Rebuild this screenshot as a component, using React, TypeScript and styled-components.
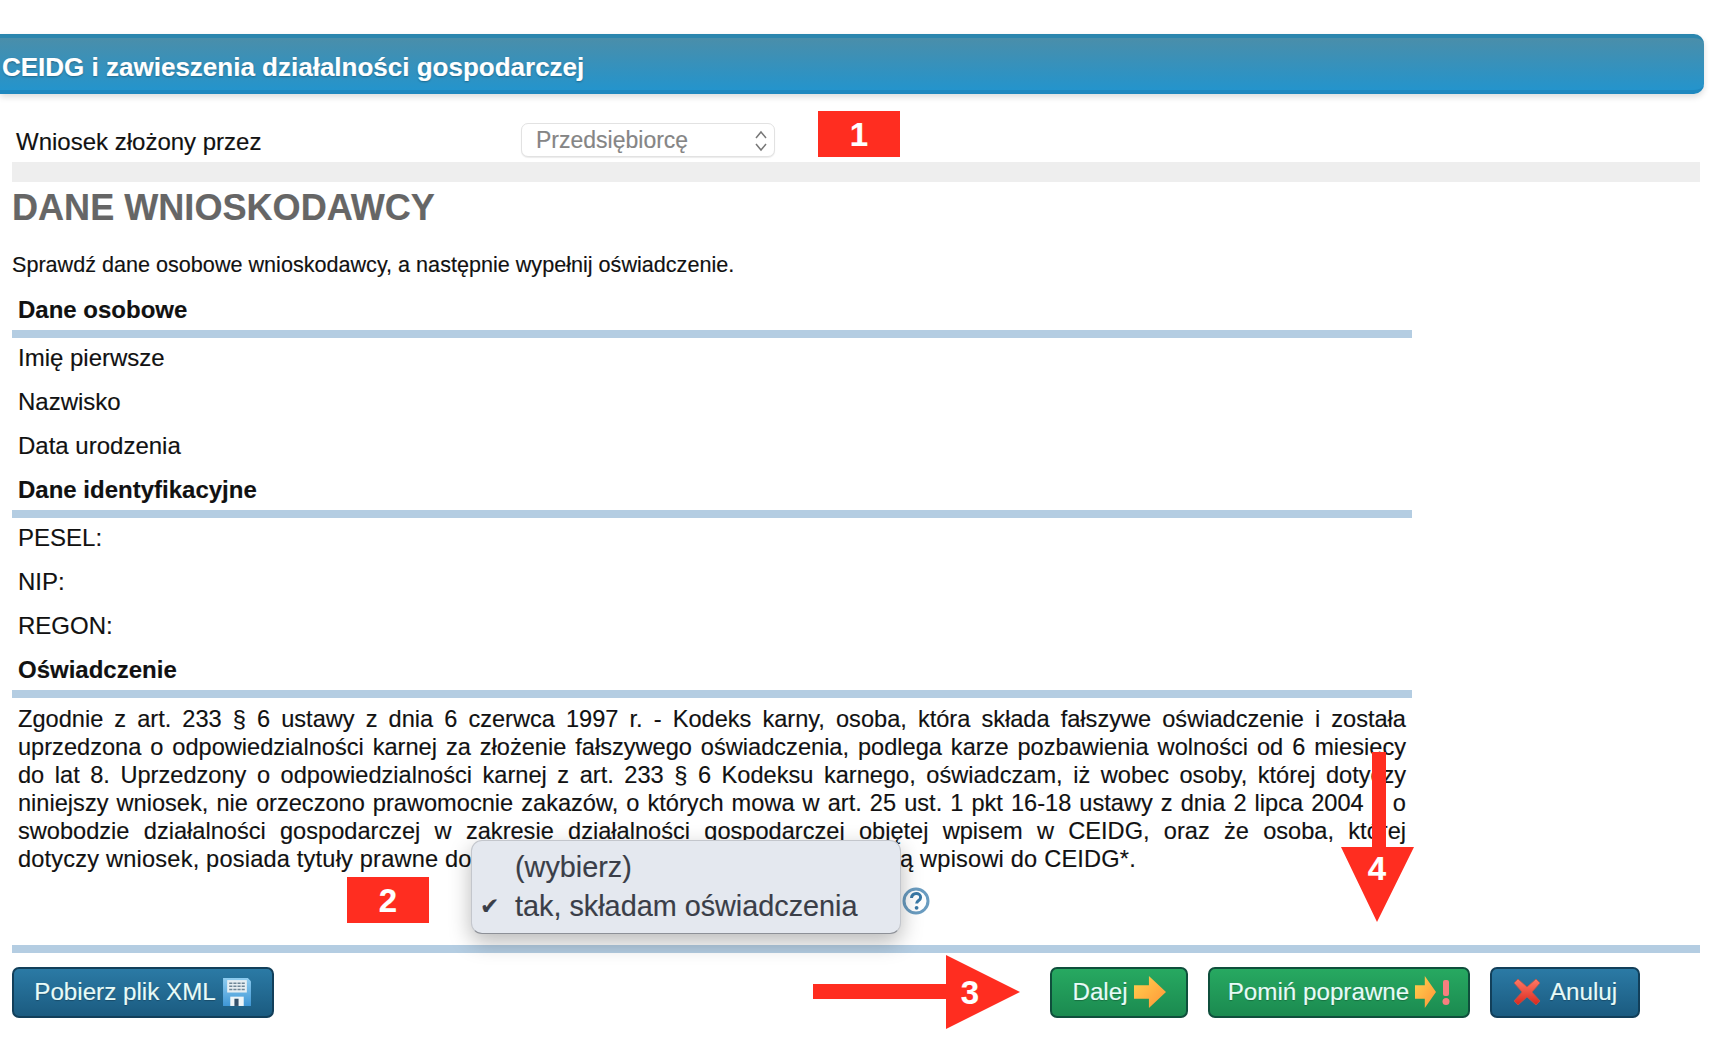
import React from "react";
import styled, { createGlobalStyle } from "styled-components";

const GlobalStyle = createGlobalStyle`
  html, body {
    margin: 0;
    padding: 0;
    background: #fff;
  }
  body {
    font-family: "Liberation Sans", Arial, sans-serif;
    color: #111;
    -webkit-text-stroke: 0.15px currentColor;
  }
`;

const Page = styled.div`
  position: relative;
  width: 1717px;
  height: 1052px;
  padding-top: 34px;
  box-sizing: border-box;
  overflow: hidden;
`;

const TitleBar = styled.div`
  width: 1704px;
  height: 60px;
  box-sizing: border-box;
  padding: 6px 0 0 2px;
  display: flex;
  align-items: center;
  border-top: 4px solid #2b86ae;
  border-bottom: 4px solid #1f88bf;
  border-radius: 0 10px 10px 0;
  background: linear-gradient(#4a8eaa, #2494cc);
  box-shadow: 0 3px 6px rgba(0, 0, 0, 0.14);
  color: #fff;
  font-size: 26px;
  font-weight: 700;
  text-shadow: 0 1px 2px rgba(0, 0, 0, 0.3);
`;

const Content = styled.div`
  width: 1688px;
  margin-left: 12px;
`;

const ApplicantRow = styled.div`
  height: 68px;
  box-sizing: border-box;
  padding: 29px 0 0 4px;
  display: flex;
  align-items: flex-start;
`;

const ApplicantLabel = styled.div`
  width: 505px;
  font-size: 24px;
  line-height: 38px;
`;

const FakeSelect = styled.div`
  width: 254px;
  height: 34px;
  box-sizing: border-box;
  padding: 1px 6px 0 14px;
  display: flex;
  align-items: center;
  justify-content: space-between;
  background: #fff;
  border: 1px solid #e2e2e2;
  border-radius: 7px;
  box-shadow: 0 1px 1px rgba(0, 0, 0, 0.08);
  color: #858585;
  font-size: 23px;
`;

const GreyBar = styled.div`
  height: 20px;
  background: #eeeeee;
`;

const Heading = styled.h1`
  margin: 0;
  height: 50px;
  padding-top: 1px;
  box-sizing: border-box;
  color: #666;
  font-size: 36.1px;
  line-height: 50px;
  font-weight: 700;
`;

const Intro = styled.p`
  margin: 16px 0 0;
  font-size: 21.6px;
  line-height: 34px;
`;

const Sheet = styled.div`
  width: 1400px;
`;

const SectionTitle = styled.div<{ $first?: boolean }>`
  padding: ${(p) => (p.$first ? "11px" : "3px")} 0 3px 6px;
  font-size: 24px;
  line-height: 34px;
  font-weight: 700;
`;

const Rule = styled.div`
  height: 8px;
  background: #b4cde2;
`;

const Field = styled.div`
  height: 44px;
  padding-left: 6px;
  font-size: 24px;
  line-height: 40px;
`;

const Statement = styled.div`
  width: 1388px;
  margin: 8px 0 0 6px;
  font-size: 23.6px;
  line-height: 27.9px;
  white-space: nowrap;
`;

const StatementLine = styled.div<{ $last?: boolean }>`
  text-align: justify;
  text-align-last: ${(p) => (p.$last ? "left" : "justify")};
  letter-spacing: ${(p) => (p.$last ? "0.19px" : "0")};
`;

const ConsentRow = styled.div`
  position: relative;
  height: 71.5px;
  box-sizing: border-box;
  padding: 14px 0 0 890px;
`;

const HelpIcon = styled.svg`
  display: block;
  width: 28px;
  height: 28px;
`;

const Menu = styled.div`
  position: absolute;
  left: 459px;
  top: -33px;
  width: 430px;
  height: 94px;
  box-sizing: border-box;
  padding: 7px 0;
  background: #e4e8ef;
  border: 1px solid #c3c6cc;
  border-bottom-color: #8d9097;
  border-radius: 11px;
  box-shadow: 0 8px 22px rgba(0, 0, 0, 0.28);
  color: #3a3e48;
  font-size: 28.8px;
`;

const MenuItem = styled.div`
  position: relative;
  height: 38.5px;
  padding-left: 43px;
  line-height: 38.5px;
`;

const MenuCheck = styled.span`
  position: absolute;
  left: 8px;
  top: 0;
  font-family: "DejaVu Sans", sans-serif;
  font-size: 23px;
`;

const ButtonBar = styled.div`
  margin-top: 14px;
  display: flex;
  align-items: flex-start;
  justify-content: space-between;
  padding-right: 60px;
`;

const RightButtons = styled.div`
  display: flex;
  gap: 20px;
`;

const Button = styled.button<{ $variant: "blue" | "green"; $width: number; $gap?: number }>`
  width: ${(p) => p.$width}px;
  height: 51px;
  box-sizing: border-box;
  padding: 0;
  display: flex;
  align-items: center;
  justify-content: center;
  gap: ${(p) => p.$gap ?? 6}px;
  border: 2px solid ${(p) => (p.$variant === "blue" ? "#123f5a" : "#0f4f3c")};
  border-radius: 7px;
  background: ${(p) =>
    p.$variant === "blue"
      ? "linear-gradient(#2b7aa5, #1b5b80)"
      : "linear-gradient(#27a961, #1b8a50)"};
  color: #e8fbf8;
  font-family: "Liberation Sans", Arial, sans-serif;
  font-size: 24.2px;
  text-shadow: 0 1px 1px rgba(0, 0, 0, 0.25);
`;

const Badge = styled.div<{ $x: number; $y: number }>`
  position: absolute;
  left: ${(p) => p.$x}px;
  top: ${(p) => p.$y}px;
  width: 82px;
  height: 46px;
  padding-top: 1px;
  box-sizing: border-box;
  display: flex;
  align-items: center;
  justify-content: center;
  background: #ff2d20;
  color: #fff;
  font-size: 33px;
  font-weight: 700;
`;

const ArrowDrawing = styled.svg<{ $x: number; $y: number }>`
  position: absolute;
  left: ${(p) => p.$x}px;
  top: ${(p) => p.$y}px;
`;

const ArrowLabel = styled.div<{ $x: number; $y: number }>`
  position: absolute;
  left: ${(p) => p.$x}px;
  top: ${(p) => p.$y}px;
  width: 30px;
  height: 40px;
  color: #fff;
  font-size: 33px;
  font-weight: 700;
  line-height: 40px;
  text-align: center;
`;

const statementLines = [
  "Zgodnie z art. 233 § 6 ustawy z dnia 6 czerwca 1997 r. - Kodeks karny, osoba, która składa fałszywe oświadczenie i została",
  "uprzedzona o odpowiedzialności karnej za złożenie fałszywego oświadczenia, podlega karze pozbawienia wolności od 6 miesięcy",
  "do lat 8. Uprzedzony o odpowiedzialności karnej z art. 233 § 6 Kodeksu karnego, oświadczam, iż wobec osoby, której dotyczy",
  "niniejszy wniosek, nie orzeczono prawomocnie zakazów, o których mowa w art. 25 ust. 1 pkt 16-18 ustawy z dnia 2 lipca 2004 r. o",
  "swobodzie działalności gospodarczej w zakresie działalności gospodarczej objętej wpisem w CEIDG, oraz że osoba, której",
  "dotyczy wniosek, posiada tytuły prawne do nieruchomości, których adresy podlegają wpisowi do CEIDG*.",
];

function FloppyIcon() {
  return (
    <svg width="30" height="30" viewBox="0 0 29 29">
      <defs>
        <linearGradient id="floppy" x1="0" y1="0" x2="0" y2="1">
          <stop offset="0" stopColor="#8fcdf0" />
          <stop offset="1" stopColor="#3f97d6" />
        </linearGradient>
      </defs>
      <path d="M1 1h24l3 3v24H1z" fill="url(#floppy)" />
      <rect x="5" y="3" width="19" height="12" fill="#e6eef2" />
      <path d="M7 6h15M7 9h15M7 12h15" stroke="#6d8596" strokeWidth="1.4" strokeDasharray="3 1" />
      <rect x="8" y="19" width="13" height="9" fill="#eef5f8" />
      <rect x="12" y="21" width="4" height="7" fill="#33506a" />
    </svg>
  );
}

function OrangeArrow({ id, width }: { id: string; width: number }) {
  return (
    <svg width={width} height="32" viewBox="0 0 30 31" preserveAspectRatio="none">
      <defs>
        <linearGradient id={id} x1="0" y1="0" x2="1" y2="1">
          <stop offset="0" stopColor="#ffd24f" />
          <stop offset="1" stopColor="#ff9438" />
        </linearGradient>
      </defs>
      <path d="M0 9h14V0l16 15.5L14 31v-9H0z" fill={`url(#${id})`} />
    </svg>
  );
}

function CrossIcon() {
  return (
    <svg width="28" height="28" viewBox="0 0 28 28">
      <defs>
        <linearGradient id="cross" x1="0" y1="0" x2="0" y2="1">
          <stop offset="0" stopColor="#ff7a66" />
          <stop offset="1" stopColor="#d9281e" />
        </linearGradient>
      </defs>
      <path
        d="M5 1l9 8 9-8 4 4-8 9 8 9-4 4-9-8-9 8-4-4 8-9-8-9z"
        fill="url(#cross)"
        stroke="#b8564a"
        strokeWidth="0.8"
        strokeLinejoin="round"
      />
    </svg>
  );
}

export default function App() {
  return (
    <Page>
      <GlobalStyle />
      <TitleBar>CEIDG i zawieszenia działalności gospodarczej</TitleBar>
      <Content>
        <ApplicantRow>
          <ApplicantLabel>Wniosek złożony przez</ApplicantLabel>
          <FakeSelect>
            Przedsiębiorcę
            <svg width="14" height="24" viewBox="0 0 14 24" fill="none" stroke="#777" strokeWidth="1.5">
              <path d="M2 9l5-6 5 6M2 15l5 6 5-6" />
            </svg>
          </FakeSelect>
        </ApplicantRow>
        <GreyBar />
        <Heading>DANE WNIOSKODAWCY</Heading>
        <Intro>Sprawdź dane osobowe wnioskodawcy, a następnie wypełnij oświadczenie.</Intro>
        <Sheet>
          <SectionTitle $first>Dane osobowe</SectionTitle>
          <Rule />
          <Field>Imię pierwsze</Field>
          <Field>Nazwisko</Field>
          <Field>Data urodzenia</Field>
          <SectionTitle>Dane identyfikacyjne</SectionTitle>
          <Rule />
          <Field>PESEL:</Field>
          <Field>NIP:</Field>
          <Field>REGON:</Field>
          <SectionTitle>Oświadczenie</SectionTitle>
          <Rule />
          <Statement>
            {statementLines.map((line, i) => (
              <StatementLine key={i} $last={i === statementLines.length - 1}>
                {line}
              </StatementLine>
            ))}
          </Statement>
        </Sheet>
        <ConsentRow>
          <HelpIcon viewBox="0 0 28 28">
            <circle cx="14" cy="14" r="12" fill="#fff" stroke="#6a9cc0" strokeWidth="3" />
            <path
              d="M9.500 11c0-2.800 2.200-4.400 4.700-4.400 2.500 0 4.400 1.600 4.400 3.800 0 3.200-4 3-4 6.200"
              fill="none"
              stroke="#3a79a6"
              strokeWidth="3"
            />
            <circle cx="14.600" cy="20.800" r="1.900" fill="#3a79a6" />
          </HelpIcon>
          <Menu>
            <MenuItem>(wybierz)</MenuItem>
            <MenuItem>
              <MenuCheck>✔</MenuCheck>
              tak, składam oświadczenia
            </MenuItem>
          </Menu>
        </ConsentRow>
        <Rule />
        <ButtonBar>
          <Button $variant="blue" $width={262}>
            Pobierz plik XML
            <FloppyIcon />
          </Button>
          <RightButtons>
            <Button $variant="green" $width={138}>
              Dalej
              <OrangeArrow id="next" width={32} />
            </Button>
            <Button $variant="green" $width={262}>
              Pomiń poprawne
              <OrangeArrow id="skip" width={21} />
              <svg width="8" height="28" viewBox="0 0 8 28">
                <rect x="1" y="2" width="6" height="16" rx="2" fill="#f77f7f" />
                <circle cx="4" cy="23.500" r="3.500" fill="#f77f7f" />
              </svg>
            </Button>
            <Button $variant="blue" $width={150} $gap={9}>
              <CrossIcon />
              Anuluj
            </Button>
          </RightButtons>
        </ButtonBar>
      </Content>

      <Badge $x={818} $y={111}>1</Badge>
      <Badge $x={347} $y={877}>2</Badge>

      <ArrowDrawing $x={813} $y={955} width="207" height="74" viewBox="0 0 207 74">
        <path d="M0 29h133V0l74 37-74 37V44H0z" fill="#ff2d20" />
      </ArrowDrawing>
      <ArrowLabel $x={955} $y={973}>3</ArrowLabel>

      <ArrowDrawing $x={1341} $y={752} width="73" height="170" viewBox="0 0 73 170">
        <path d="M31 0h14v95h28l-37 75L0 95h31z" fill="#ff2d20" />
      </ArrowDrawing>
      <ArrowLabel $x={1362} $y={849}>4</ArrowLabel>
    </Page>
  );
}
